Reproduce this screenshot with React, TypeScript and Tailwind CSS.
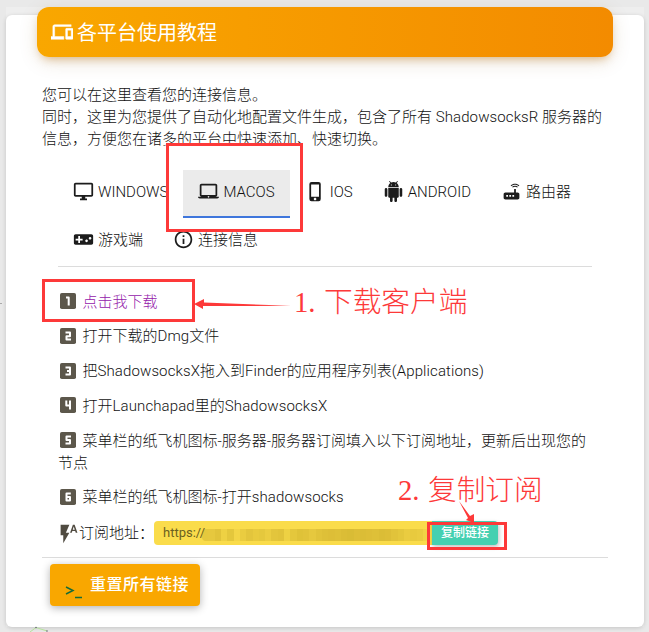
import type { ReactNode } from "react";
import { MdFlashAuto, MdInfoOutline, MdLaptopMac, MdPhoneIphone, MdRouter, MdVideogameAsset } from "react-icons/md";

function AndroidIcon() {
  return (
    <svg viewBox="0 0 24 24" width="21" height="21" fill="currentColor">
      <path d="M6 18c0 .55.45 1 1 1h1v3.5c0 .83.67 1.5 1.5 1.5s1.5-.67 1.5-1.5V19h2v3.5c0 .83.67 1.5 1.5 1.5s1.5-.67 1.5-1.5V19h1c.55 0 1-.45 1-1V8H6v10zM3.5 8C2.67 8 2 8.67 2 9.5v7c0 .83.67 1.5 1.5 1.5S5 17.33 5 16.5v-7C5 8.67 4.33 8 3.5 8zm17 0c-.83 0-1.5.67-1.5 1.5v7c0 .83.67 1.5 1.5 1.5s1.5-.67 1.5-1.5v-7c0-.83-.67-1.5-1.5-1.5zm-4.97-5.84l1.3-1.3c.2-.2.2-.51 0-.71-.2-.2-.51-.2-.71 0l-1.48 1.48C13.85 1.23 12.95 1 12 1c-.96 0-1.86.23-2.66.63L7.85.15c-.2-.2-.51-.2-.71 0-.2.2-.2.51 0 .71l1.31 1.31C6.97 3.26 6 5.01 6 7h12c0-1.99-.97-3.75-2.47-4.84zM10 5H9V4h1v1zm5 0h-1V4h1v1z" />
    </svg>
  );
}

function DesktopIcon() {
  return (
    <svg viewBox="0 0 24 24" width="21" height="21" fill="currentColor">
      <path d="M21 2H3c-1.1 0-2 .9-2 2v12c0 1.1.9 2 2 2h7v2H8v2h8v-2h-2v-2h7c1.1 0 2-.9 2-2V4c0-1.1-.9-2-2-2zm0 14H3V4h18v12z" />
    </svg>
  );
}

function DevicesIcon() {
  return (
    <svg
      viewBox="0 0 24 24"
      width="22"
      height="22"
      fill="currentColor"
      stroke="currentColor"
      strokeWidth="0.5"
      className="mr-px"
    >
      <path d="M4 6h18V4H4c-1.1 0-2 .9-2 2v11H0v3h14v-3H4V6zm19 2h-6c-.55 0-1 .45-1 1v10c0 .55.45 1 1 1h6c.55 0 1-.45 1-1V9c0-.55-.45-1-1-1zm-1 9h-4v-7h4v7z" />
    </svg>
  );
}

// Strokes of the numerals inside the 16px step badges
const numerals = [
  "M6 4.5H8.7V12.5",
  "M5.5 4.5H10V8.2H6.5V11.5H11",
  "M5.5 4.5H10V11.5H5.5M7 8H10",
  "M6.3 3.5V8.5H10M10 3.5V12.5",
  "M11 4.5H6.5V8H10V11.5H5.5",
  "M10.8 4.5H6.5V11.5H10V8H6.5",
];

function StepBadge({ value }: { value: number }) {
  return (
    <svg viewBox="0 0 16 16" width="16" height="16" className="mr-[3px] ml-[2px] mt-[2.5px]">
      <rect width="16" height="16" rx="1.8" fill="#5c574b" />
      <path d={numerals[value - 1]} fill="none" stroke="#fff" strokeWidth="2" strokeLinejoin="round" />
    </svg>
  );
}

function Tab({ icon, label, active = false }: { icon: ReactNode; label: string; active?: boolean }) {
  return (
    <button
      className={
        active
          ? "flex h-12 shrink-0 items-center gap-1 border-b-2 border-[#3f76dc] bg-[#ebebeb] px-[15px] pb-[3px] whitespace-nowrap"
          : "flex h-12 shrink-0 items-center gap-1 px-[15px] pb-[5px] whitespace-nowrap"
      }
    >
      <span className="shrink-0 text-[#1c1c1c]">{icon}</span>
      <span>{label}</span>
    </button>
  );
}

function Step({ value, children }: { value: number; children: ReactNode }) {
  return (
    <li className="mb-[12.8px]">
      <span className="mr-[3.5px] inline-block h-[21px] align-top">
        <StepBadge value={value} />
      </span>
      {children}
    </li>
  );
}

// Latin words, slightly opened up between the full-width characters
function En({ children }: { children: ReactNode }) {
  return <span className="tracking-[0.11px]">{children}</span>;
}

// Pixelated censor strip hiding the subscription URL
const mosaic = [
  0.25, 0.24, 0.3, 0.14, 0.26, 0.08, 0.2, 0.28, 0.22, 0.25, 0.18, 0.28, 0.3, 0.14, 0.26, 0.32, 0.3, 0.24, 0.3, 0.34, 0.36,
  0.34, 0.38, 0.4, 0.36, 0.38, 0.36, 0.34, 0.38, 0.36, 0.3, 0.26, 0.2, 0.22, 0.2, 0.1,
];

export default function App() {
  return (
    <div className="relative h-[632px] w-[649px] overflow-hidden bg-[#e9e9e9] pt-[7px] pl-[6px] font-['Roboto','Noto_Sans_CJK_SC',sans-serif] text-[15px] leading-[22px] font-light text-[#111111]">
      <div className="w-[638px] bg-[#eeeeee] pt-2">
        <main className="h-[612px] rounded-[6px] bg-white shadow-[0_1px_4px_rgba(0,0,0,0.16)]">
          <header className="relative -top-2 ml-[31px] flex h-[50px] w-[576px] items-center gap-[3px] rounded-[12px] bg-linear-to-r from-[#f9a700] to-[#f38b00] pl-[14px] text-[20px] font-normal text-white shadow-[0_5px_20px_-2px_rgba(120,80,0,0.2),0_5px_10px_-4px_rgba(200,110,0,0.45)]">
            <DevicesIcon />
            <h1 className="pt-px">各平台使用教程</h1>
          </header>

          <section className="ml-9 w-[566px] pt-[19px]">
            <p>您可以在这里查看您的连接信息。</p>
            <p className="whitespace-nowrap">
              同时，这里为您提供了自动化地配置文件生成，包含了所有 <En>ShadowsocksR</En> 服务器的
              <br />
              信息，方便您在诸多的平台中快速添加、快速切换。
            </p>

            <nav className="mx-4 mt-5 flex flex-wrap border-b border-[#dcdcdc]">
              <Tab icon={<DesktopIcon />} label="WINDOWS" />
              <Tab icon={<MdLaptopMac size={21} />} label="MACOS" active />
              <Tab icon={<MdPhoneIphone size={21} />} label="IOS" />
              <Tab icon={<AndroidIcon />} label="ANDROID" />
              <Tab icon={<MdRouter size={21} />} label="路由器" />
              <Tab icon={<MdVideogameAsset size={21} />} label="游戏端" />
              <Tab icon={<MdInfoOutline size={21} />} label="连接信息" />
            </nav>

            <ol className="mx-4 pt-[23.5px]">
              <Step value={1}>
                <a className="text-[#9418aa]">点击我下载</a>
              </Step>
              <Step value={2}>
                打开下载的<En>Dmg</En>文件
              </Step>
              <Step value={3}>
                把<En>ShadowsocksX</En>拖入到<En>Finder</En>的应用程序列表<En>(Applications)</En>
              </Step>
              <Step value={4}>
                打开<En>Launchapad</En>里的<En>ShadowsocksX</En>
              </Step>
              <Step value={5}>
                菜单栏的纸飞机图标-服务器-服务器订阅填入以下订阅地址，更新后出现您的
                <br />
                节点
              </Step>
              <Step value={6}>
                菜单栏的纸飞机图标-打开<En>shadowsocks</En>
              </Step>
            </ol>

            <div className="ml-4 flex h-6 items-center">
              <MdFlashAuto size={21} className="shrink-0 text-[#504b41]" />
              <span className="w-[75px] shrink-0 whitespace-nowrap">订阅地址：</span>
              <div className="flex h-6 w-[278px] shrink-0 items-center rounded-l-[4px] bg-[#fadc4b] pl-[9px] text-[13px] font-normal text-[#6b611f]">
                <span className="w-[39px]">https://</span>
                <div className="mt-[3px] flex h-3 w-[227px] overflow-hidden rounded-[4px]">
                  {mosaic.map((opacity, i) => (
                    <i key={i} className="h-full flex-1 bg-[#a88b14]" style={{ opacity }} />
                  ))}
                </div>
              </div>
              <button className="h-6 w-[66px] shrink-0 rounded-r-[4px] bg-[#45d0b1] text-[12px] leading-6 font-medium text-white shadow-[1px_2px_4px_rgba(0,0,0,0.25)]">
                复制链接
              </button>
            </div>

            <hr className="mt-3 border-t border-[#dcdcdc]" />
            <button className="mt-[6px] ml-2 flex h-[42px] w-[150px] items-center rounded-[4px] bg-[#f9a700] pl-[15px] text-[16px] font-medium text-white shadow-[0_2px_8px_rgba(0,0,0,0.3)]">
              <svg className="mt-[14px] mr-2" width="17" height="14" fill="none" stroke="#176c38" strokeWidth="1.5">
                <path d="M1 2L8 5.5L1 9M10 12.5H17" />
              </svg>
              <span className="tracking-[0.5px]">重置所有链接</span>
            </button>
          </section>
        </main>
      </div>

      <div className="absolute top-[143px] left-[166px] h-[89px] w-[137px] border-3 border-[#fd3939]" />
      <div className="absolute top-[279px] left-[42px] h-[43px] w-[153px] border-3 border-[#fd3939]" />
      <div className="absolute top-[522px] left-[427px] h-7 w-20 border-3 border-[#fd3939]" />
      <div className="absolute top-[285px] left-[294px] flex font-['Liberation_Serif','Noto_Sans_CJK_SC',serif] text-[28.7px] leading-[34px] whitespace-nowrap text-[#fd3939]">
        <span className="w-[30px]">1.</span>
        <span>下载客户端</span>
      </div>
      <div className="absolute top-[473px] left-[398px] flex font-['Liberation_Serif','Noto_Sans_CJK_SC',serif] text-[28.7px] leading-[34px] whitespace-nowrap text-[#fd3939]">
        <span className="w-[30px]">2.</span>
        <span>复制订阅</span>
      </div>
      <svg className="pointer-events-none absolute inset-0" width="649" height="632">
        <path d="M194 304L204 299V302.5L291 305.8L203 306V309Z" fill="#fd3939" />
        <path d="M459 501L470 516L474 514V523L466 520L468 518Z" fill="#fd3939" />
        <path d="M0 303.5H2" stroke="#aaa" />
        <path d="M30 632L36 627.5L47 631" stroke="#b4e39a" fill="none" />
        <circle cx="36" cy="627.5" r="0.8" fill="#667" />
        <circle cx="47" cy="631" r="0.8" fill="#667" />
      </svg>
    </div>
  );
}
